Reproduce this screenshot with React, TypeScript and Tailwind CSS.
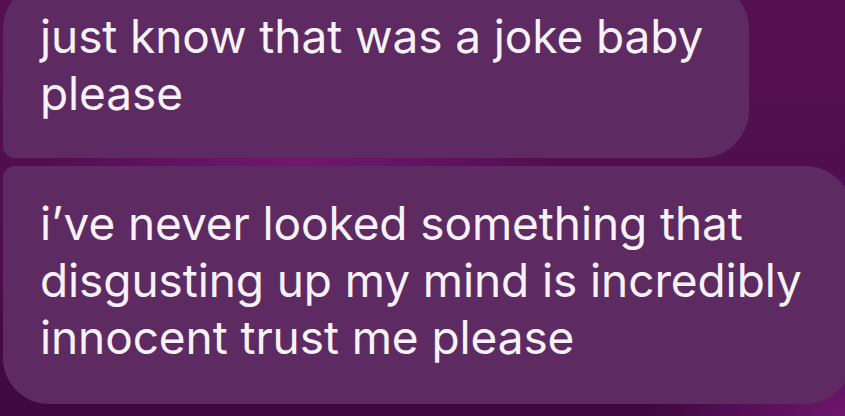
import React from 'react';

const messages = [
  {
    id: 1,
    lines: ['just know that was a joke baby', 'please'],
    className: 'w-[746px] pt-[27px] pb-[36px] rounded-tl-[48px] rounded-tr-[48px] rounded-br-[48px] rounded-bl-[12px]',
  },
  {
    id: 2,
    lines: ['i’ve never looked something that', 'disgusting up my mind is incredibly', 'innocent trust me please'],
    className: 'w-[850px] pt-[29px] pb-[38px] rounded-tl-[12px] rounded-tr-[48px] rounded-br-[48px] rounded-bl-[46px]',
  },
];

const App: React.FC = () => {
  return (
    <div className="w-[845px] h-[416px] overflow-hidden bg-[#520f50] bg-[radial-gradient(ellipse_260px_30px_at_300px_162px,#71176f_0%,transparent_100%),radial-gradient(ellipse_200px_140px_at_845px_416px,#6d166c_0%,transparent_100%),linear-gradient(180deg,#561052_0%,#4e0e4e_60%,#3d083f_100%)]">
      {/* Message group */}
      <div className="flex flex-col gap-[8px] pl-[3px] -mt-[19px]">
        {messages.map((msg) => (
          <div
            key={msg.id}
            className={`bg-[#5d2b62] pl-[37px] text-[#f7f1f8] text-[46px] leading-[57px] whitespace-nowrap font-['Inter','Liberation_Sans',sans-serif] tracking-[-0.1px] ${msg.className}`}
          >
            {msg.lines.map((line, i) => (
              <div key={i}>{line}</div>
            ))}
          </div>
        ))}
      </div>
    </div>
  );
};

export default App;
